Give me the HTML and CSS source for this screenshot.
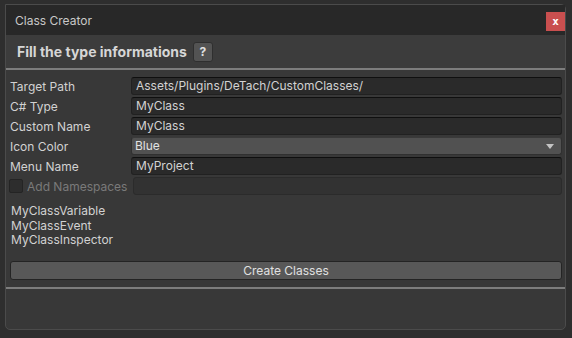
FILE: index.html
```html
<!DOCTYPE html>
<html lang="en">
<head>
    <meta charset="UTF-8">
    <title>Class Creator</title>
    <link rel="stylesheet" href="styles.css">
</head>
<body>
<div class="window">
    <div class="titlebar">
        <span class="title">Class Creator</span>
        <button class="close">x</button>
    </div>

    <div class="header">
        <h3>Fill the type informations</h3>
        <button class="help">?</button>
    </div>
    <div class="separator"></div>

    <div class="form">
        <div class="row">
            <label>Target Path</label>
            <div class="field">Assets/Plugins/DeTach/CustomClasses/</div>
        </div>
        <div class="row">
            <label>C# Type</label>
            <div class="field">MyClass</div>
        </div>
        <div class="row">
            <label>Custom Name</label>
            <div class="field">MyClass</div>
        </div>
        <div class="row">
            <label>Icon Color</label>
            <div class="field dropdown">Blue<span class="arrow"></span></div>
        </div>
        <div class="row">
            <label>Menu Name</label>
            <div class="field">MyProject</div>
        </div>
        <div class="row disabled">
            <label><span class="checkbox"></span>Add Namespaces</label>
            <div class="field"></div>
        </div>

        <div class="preview">
            <div>MyClassVariable</div>
            <div>MyClassEvent</div>
            <div>MyClassInspector</div>
        </div>

        <button class="create">Create Classes</button>
    </div>
    <div class="separator"></div>
</div>
</body>
</html>
```

FILE: styles.css
```css
html, body {
    margin: 0;
    height: 100%;
}

body {
    background: #2e2e2e;
    font-family: Inter, "Noto Sans", sans-serif;
    font-size: 12px;
    color: #d2d2d2;
    padding: 4px 6px 0 5px;
    box-sizing: border-box;
}

.window {
    height: 326px;
    box-sizing: border-box;
    background: #383838;
    border: 1px solid #4b4b4b;
    border-radius: 0 5px 5px 5px;
}

.titlebar {
    display: flex;
    align-items: center;
    justify-content: space-between;
    height: 30px;
    background: #282828;
    padding: 0 0 0 9px;
}

.title {
    font-size: 12px;
    color: #c8c8c8;
}

.close {
    width: 19px;
    height: 19px;
    margin-top: 2px;
    border: none;
    background: #c94f4f;
    color: #fff;
    font-family: "DejaVu Sans Mono", monospace;
    font-weight: bold;
    font-size: 11px;
    padding: 0;
    line-height: 17px;
}

.header {
    display: flex;
    align-items: center;
    gap: 6px;
    height: 33px;
    padding-left: 11px;
    background: #3c3c3c;
}

.header h3 {
    margin: 0;
    font-size: 14px;
    font-weight: bold;
    color: #d6d6d6;
}

.help {
    width: 20px;
    height: 20px;
    padding: 0;
    border: 1px solid #2f2f2f;
    border-radius: 3px;
    background: #535353;
    color: #e0e0e0;
    font-family: Inter, sans-serif;
    font-weight: bold;
    font-size: 12px;
}

.separator {
    height: 2px;
    background: #7d7d7d;
}

.form {
    padding: 7px 3px 7px 4px;
}

.row {
    display: flex;
    align-items: center;
    height: 18px;
    margin-bottom: 2px;
}

.row label {
    display: flex;
    align-items: center;
    width: 121px;
    flex: none;
    white-space: nowrap;
}

.field {
    flex: 1;
    height: 18px;
    box-sizing: border-box;
    background: #2a2a2a;
    border: 1px solid #212121;
    border-top-color: #0f0f0f;
    border-radius: 3px;
    padding: 0 4px;
    line-height: 16px;
    color: #d2d2d2;
}

.dropdown {
    position: relative;
    background: #515151;
    border-color: #303030;
    border-top-color: #3a3a3a;
    padding-left: 3px;
    color: #e2e2e2;
}

.arrow {
    position: absolute;
    right: 7px;
    top: 6px;
    border-left: 4px solid transparent;
    border-right: 4px solid transparent;
    border-top: 5px solid #c4c4c4;
}

.disabled label {
    color: #7a7a7a;
}

.disabled .field {
    margin-left: 2px;
    background: #323232;
    border-color: #2b2b2b;
}

.checkbox {
    width: 12px;
    height: 12px;
    background: #2d2d2d;
    border: 1px solid #242424;
    border-radius: 2px;
    margin: 0 4px 0 -1px;
}

.preview {
    padding: 7px 0 0 1px;
    line-height: 14.6px;
    height: 52px;
}

.create {
    display: block;
    width: 100%;
    height: 19px;
    padding: 0;
    margin-top: 5px;
    background: #585858;
    border: 1px solid #242424;
    border-radius: 3px;
    color: #e0e0e0;
    font-family: Inter, sans-serif;
    font-size: 12px;
}
```
